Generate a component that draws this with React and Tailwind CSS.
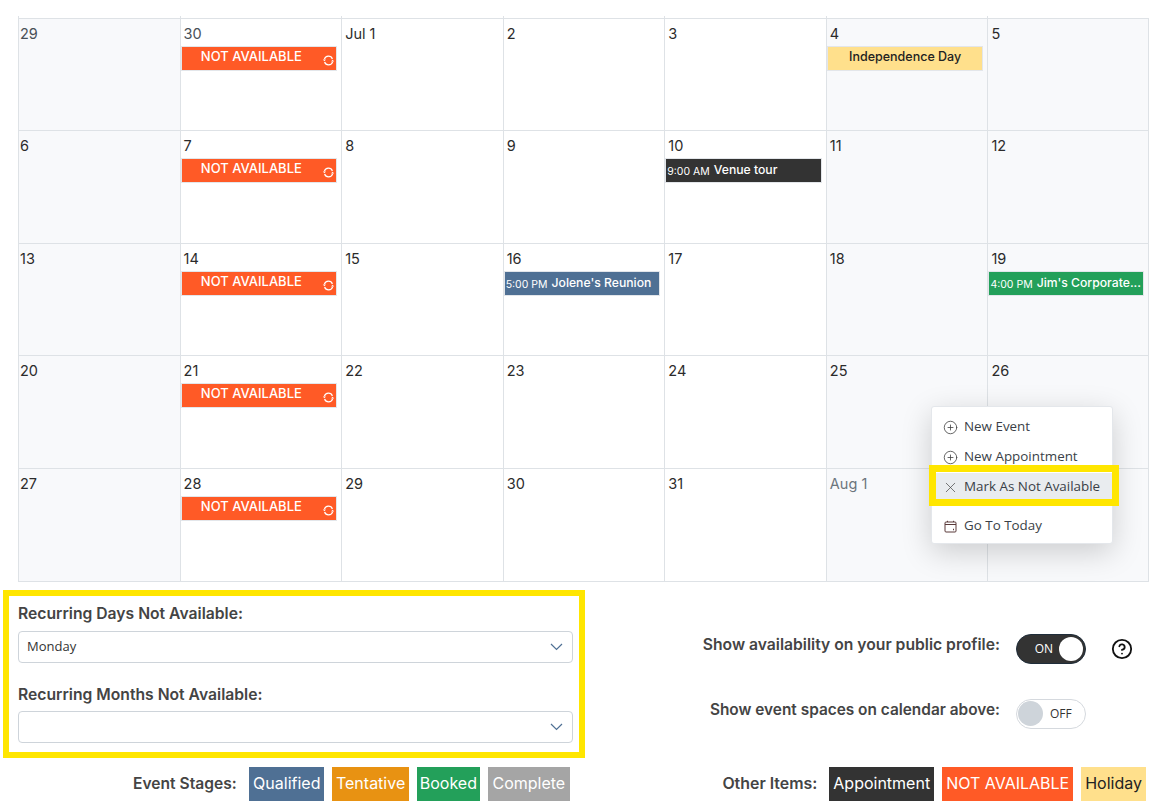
import { CirclePlus, CircleHelp, X } from 'lucide-react';

const weeks = [
  [
    { label: '29', tone: 'text-[#495057]' },
    { label: '30', tone: 'text-[#495057]', na: true },
    { label: 'Jul 1' },
    { label: '2' },
    { label: '3' },
    { label: '4', holiday: 'Independence Day' },
    { label: '5' },
  ],
  [
    { label: '6' },
    { label: '7', na: true },
    { label: '8' },
    { label: '9' },
    { label: '10', event: { time: '9:00 AM', name: 'Venue tour', bg: 'bg-[#333333]' } },
    { label: '11' },
    { label: '12' },
  ],
  [
    { label: '13' },
    { label: '14', na: true },
    { label: '15' },
    { label: '16', event: { time: '5:00 PM', name: "Jolene's Reunion", bg: 'bg-[#4f7094]' } },
    { label: '17' },
    { label: '18' },
    { label: '19', event: { time: '4:00 PM', name: "Jim's Corporate...", bg: 'bg-[#23a05a]' } },
  ],
  [
    { label: '20' },
    { label: '21', na: true },
    { label: '22' },
    { label: '23' },
    { label: '24' },
    { label: '25' },
    { label: '26' },
  ],
  [
    { label: '27' },
    { label: '28', na: true },
    { label: '29' },
    { label: '30' },
    { label: '31' },
    { label: 'Aug 1', tone: 'text-[#6c757d]' },
    { label: '' },
  ],
];

function RepeatIcon() {
  return (
    <svg className="absolute right-[1px] top-[7px]" width="13" height="13" viewBox="0 0 13 13" fill="none" stroke="white" strokeWidth="1.2">
      <path d="M2.4 5.2A4.2 4.2 0 0 1 10.4 5" />
      <path d="M10.6 7.8A4.2 4.2 0 0 1 2.6 8" />
      <path d="M0.8 5.4H4L2.4 7.2Z" fill="white" stroke="none" />
      <path d="M9 7.6H12.2L10.6 5.8Z" fill="white" stroke="none" />
    </svg>
  );
}

function Chevron() {
  return (
    <svg width="13" height="8" viewBox="0 0 13 8" fill="none" stroke="#4f7094" strokeWidth="1.2">
      <path d="M1 1L6.5 6.5L12 1" />
    </svg>
  );
}

function DayCell({ day, col, row }) {
  const muted = col === 0 || col === 5 || col === 6;
  return (
    <div
      className={`relative border-l border-t border-[#dee2e6] ${muted ? 'bg-[#f8f9fb]' : 'bg-white'} ${col === 6 ? 'border-r' : ''} ${row === 4 ? 'border-b h-[114px]' : 'h-[112.5px]'} ${row === 0 ? 'before:absolute before:-top-[3px] before:-left-[1px] before:w-px before:h-[2px] before:bg-[#dee2e6]' : ''}`}
    >
      <div className={`${col === 0 ? 'pl-[1px]' : 'pl-[3px]'} pt-[5px] h-[27px] text-[14.5px] leading-[20px] ${day.tone || 'text-[#2b2b2b]'}`}>
        {day.label}
      </div>
      {day.na && (
        <div className="relative mr-[4px] h-[25px] bg-[#ff5a26] border border-[#e3e6ea] text-center text-white text-[13px] font-medium leading-[19px] pr-[15px]">
          NOT AVAILABLE
          <RepeatIcon />
        </div>
      )}
      {day.holiday && (
        <div className="mr-[4px] h-[25px] bg-[#ffe08c] border border-[#e3e6ea] text-center text-[#222] text-[12.5px] font-medium leading-[19px]">
          {day.holiday}
        </div>
      )}
      {day.event && (
        <div className={`mr-[4px] h-[25px] ${day.event.bg} border border-[#e3e6ea] pl-[1px] text-white leading-[18px] whitespace-nowrap overflow-hidden`}>
          <span className="relative top-[1px] text-[10.5px] mr-[4px]">{day.event.time}</span>
          <span className="text-[12.2px] font-medium">{day.event.name}</span>
        </div>
      )}
    </div>
  );
}

function MenuItem({ icon, label, active }) {
  return (
    <div className={`relative flex items-center h-[27px] pl-[12px] text-[13.4px] text-[#3a3f47] font-["Open_Sans","Noto_Sans",sans-serif] ${active ? 'bg-[#e9ecef]' : ''}`}>
      <span className="w-[20px] flex-none flex items-center mt-[2px] -ml-[1px] mr-[1px]">{icon}</span>
      {label}
    </div>
  );
}

function ContextMenu() {
  return (
    <div className="absolute left-[931px] top-[406px] w-[182px] h-[138px] bg-white rounded-[3px] border border-[#e4e7eb] shadow-[0_8px_30px_rgba(0,0,0,0.18)] pt-[6px]">
      <div className="flex flex-col gap-[3px]">
        <MenuItem label="New Event" icon={<CirclePlus size={15} strokeWidth={1.3} color="#444" />} />
        <MenuItem label="New Appointment" icon={<CirclePlus size={15} strokeWidth={1.3} color="#444" />} />
        <MenuItem label="Mark As Not Available" active icon={<X size={17} strokeWidth={1} color="#444" className="-ml-[1px]" />} />
      </div>
      <div className="mt-[12px]">
        <MenuItem
          label="Go To Today"
          icon={
            <svg className="ml-[1px]" width="13" height="13" viewBox="0 0 13 13" fill="none" stroke="#5a3a3a" strokeWidth="1">
              <rect x="1" y="2" width="11" height="10" rx="1" />
              <path d="M1 4.5H12M3.5 0.8V2M9.5 0.8V2" />
              <path d="M9 9.5H10" strokeWidth="1.4" />
            </svg>
          }
        />
      </div>
      <div className="absolute left-[-3px] right-[-7px] top-[58px] h-[41px] border-[7px] border-[#ffe600]" />
    </div>
  );
}

function SelectBox({ value }) {
  return (
    <div className="flex items-center justify-between h-[32px] rounded-[4px] border border-[#ced4da] bg-white pl-[8px] pr-[9px] text-[13px] text-[#333] font-['Open_Sans',sans-serif]">
      <span>{value}</span>
      <Chevron />
    </div>
  );
}

function Chip({ bg, text, pad = 'px-[4px]', children }) {
  return <div className={`h-[34px] leading-[33px] text-[16px] ${pad} ${bg} ${text}`}>{children}</div>;
}

export default function App() {
  return (
    <div className="relative w-[1158px] h-[808px] overflow-hidden bg-white pt-[17.6px] font-['Inter','Liberation_Sans',sans-serif]">
      <div className="ml-[18px] w-[1131px] grid grid-cols-7">
        {weeks.map((week, row) =>
          week.map((day, col) => <DayCell key={`${row}-${col}`} day={day} col={col} row={row} />)
        )}
      </div>

      <div className="flex">
        <div className="ml-[3px] mt-[8.4px] w-[582px]">
          <div className="h-[168px] border-[6px] border-[#ffe600] pl-[9px] pr-[6px] pt-[8px]">
            <div className="h-[27px] text-[15.7px] font-semibold text-[#444] leading-[20px]">Recurring Days Not Available:</div>
            <SelectBox value="Monday" />
            <div className="h-[26px] mt-[22px] text-[15.7px] font-semibold text-[#444] leading-[20px]">Recurring Months Not Available:</div>
            <SelectBox value="" />
          </div>
          <div className="flex items-center gap-[8px] mt-[9px] pl-[130px]">
            <span className="mr-[4.4px] text-[15.6px] font-semibold text-[#444]">Event Stages:</span>
            <Chip bg="bg-[#4f7094]" text="text-white">Qualified</Chip>
            <Chip bg="bg-[#e89212]" text="text-white" pad="px-[3.5px]">Tentative</Chip>
            <Chip bg="bg-[#23a05a]" text="text-white" pad="px-[3px]">Booked</Chip>
            <Chip bg="bg-[#a5a5a5]" text="text-white" pad="px-[4.5px]">Complete</Chip>
          </div>
        </div>

        <div className="flex-1 relative pt-[52.4px]">
          <div className="flex items-center justify-end h-[30px] pr-[25px]">
            <span className="text-[15.7px] font-semibold text-[#444] mr-[16px] mb-[8px] whitespace-nowrap">Show availability on your public profile:</span>
            <div className="flex items-center justify-end w-[70px] h-[30px] rounded-full bg-[#333] border border-[#1f2d3a] pr-[2px]">
              <span className="text-[12px] text-white mr-[6px] font-['Open_Sans',sans-serif]">ON</span>
              <span className="w-[24px] h-[24px] rounded-full bg-white" />
            </div>
            <CircleHelp size={22} strokeWidth={2} className="ml-[25px] text-[#111]" />
          </div>
          <div className="flex items-center justify-end h-[30px] mt-[35px] pr-[72px]">
            <span className="text-[15.4px] font-semibold text-[#444] mr-[16px] mb-[8px] whitespace-nowrap">Show event spaces on calendar above:</span>
            <div className="flex items-center w-[70px] h-[30px] rounded-full bg-white border border-[#d5d9de] pl-[1px]">
              <span className="w-[25px] h-[25px] rounded-full bg-[#ced4da]" />
              <span className="text-[12px] text-[#333] ml-[7px] font-['Open_Sans',sans-serif]">OFF</span>
            </div>
          </div>
          <div className="flex items-center justify-end gap-[8px] mt-[38px] pr-[12px]">
            <span className="mr-[4px] text-[15.9px] font-semibold text-[#444]">Other Items:</span>
            <Chip bg="bg-[#333333]" text="text-white">Appointment</Chip>
            <Chip bg="bg-[#ff5a26]" text="text-white">NOT AVAILABLE</Chip>
            <Chip bg="bg-[#ffe08c]" text="text-[#222]">Holiday</Chip>
          </div>
        </div>
      </div>

      <ContextMenu />
    </div>
  );
}
